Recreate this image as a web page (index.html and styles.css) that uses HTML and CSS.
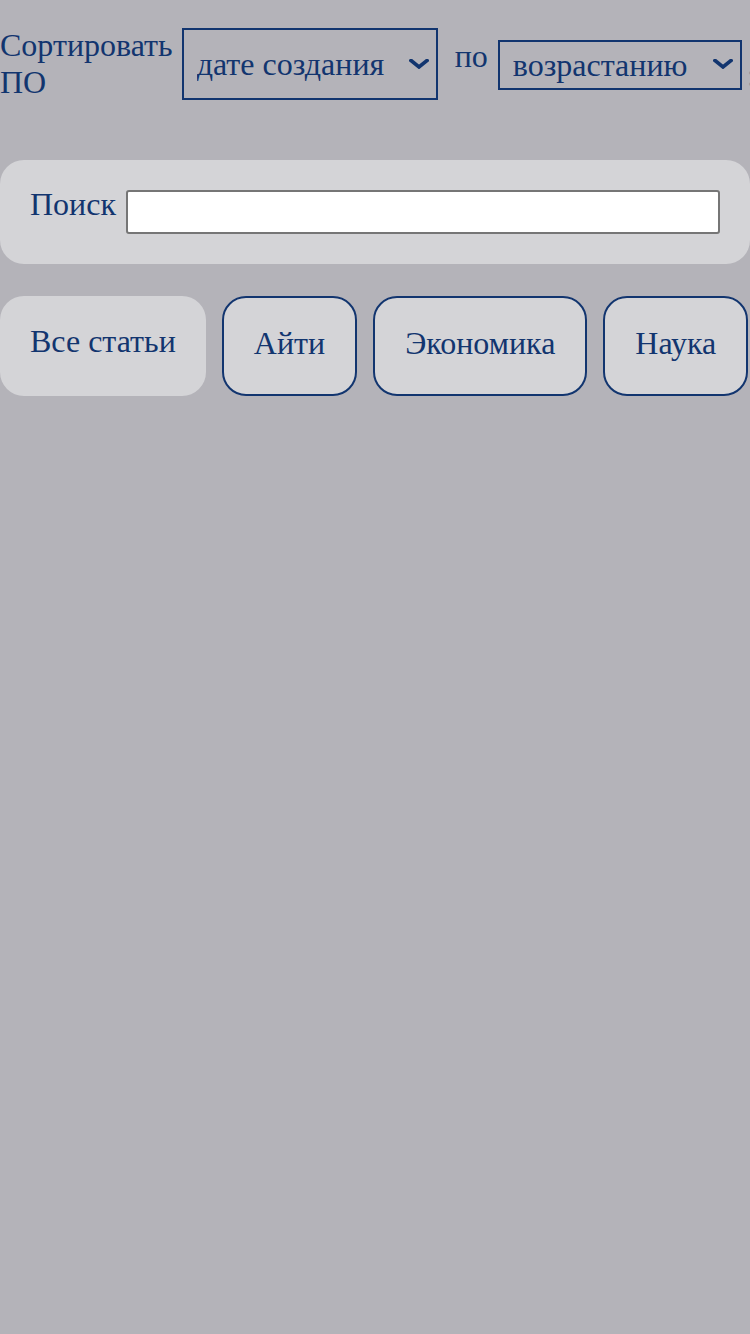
FILE: index.html
```html
<!DOCTYPE html>
<html lang="ru">
<head>
<meta charset="utf-8">
<link rel="stylesheet" href="styles.css">
</head>
<body>
<div class="page">
  <div class="sort-row">
    <label class="sort-label">Сортировать<br>ПО</label>
    <div class="select-wrap sort-field">
      <select class="sort-select">
        <option>дате создания</option>
      </select>
      <svg class="chevron" viewBox="0 0 20 10" width="20" height="10"><polyline points="2,1.5 10,8 18,1.5" fill="none" stroke="#12356f" stroke-width="3.6" stroke-linecap="square"/></svg>
    </div>
    <span class="by-label">по</span>
    <div class="select-wrap sort-order">
      <select class="sort-select">
        <option>возрастанию</option>
      </select>
      <svg class="chevron" viewBox="0 0 20 10" width="20" height="10"><polyline points="2,1.5 10,8 18,1.5" fill="none" stroke="#12356f" stroke-width="3.6" stroke-linecap="square"/></svg>
    </div>
    <span class="overflow">:</span>
  </div>
  <div class="search-panel">
    <label class="search-label">Поиск</label>
    <input class="search-input" type="text">
  </div>
  <div class="tags">
    <button class="tag tag-active">Все статьи</button>
    <button class="tag">Айти</button>
    <button class="tag">Экономика</button>
    <button class="tag">Наука</button>
  </div>
</div>
</body>
</html>
```
FILE: styles.css
```css
html, body {
  margin: 0;
  padding: 0;
  background: #b4b3b9;
}
body {
  font-family: "Liberation Serif", "Times New Roman", serif;
  color: #12356f;
  width: 750px;
  height: 1334px;
  overflow: hidden;
}
.page {
  padding-top: 28px;
}
.sort-row {
  display: flex;
  align-items: center;
  height: 72px;
  white-space: nowrap;
}
.sort-label {
  font-size: 32px;
  line-height: normal;
  margin-right: 9px;
}
.select-wrap {
  position: relative;
  flex: none;
}
.sort-select {
  display: block;
  width: 100%;
  height: 100%;
  font-family: "Liberation Serif", "Times New Roman", serif;
  font-size: 32px;
  color: #12356f;
  background: transparent;
  border: 2px solid #12356f;
  border-radius: 0;
  box-sizing: border-box;
  padding: 0 40px 0 13px;
  margin: 0;
  appearance: none;
  -webkit-appearance: none;
  outline: none;
}
.chevron {
  position: absolute;
  right: 9px;
  top: 50%;
  margin-top: -5px;
  pointer-events: none;
}
.sort-field {
  width: 256px;
  height: 72px;
}
.sort-order {
  width: 244px;
  height: 50px;
  margin-top: 2px;
}
.sort-order .chevron {
  margin-top: -6px;
}
.by-label {
  font-size: 32px;
  line-height: normal;
  margin: 10px 10px 0 17px;
  align-self: flex-start;
}
.overflow {
  font-size: 32px;
  color: #8a8f9c;
  margin-left: 5px;
  margin-top: 22px;
}
.search-panel {
  margin-top: 60px;
  background: #d4d4d7;
  border-radius: 24px;
  height: 104px;
  box-sizing: border-box;
  padding: 26px 30px 0 30px;
  display: flex;
  align-items: flex-start;
  gap: 10px;
}
.search-label {
  font-size: 32px;
  line-height: normal;
}
.search-input {
  flex: 1;
  height: 44px;
  margin-top: 4px;
  box-sizing: border-box;
  border: 2px solid #767676;
  border-radius: 3px;
  background: #fff;
  font-size: 30px;
}
.tags {
  margin-top: 32px;
  display: flex;
  gap: 16px;
}
.tag {
  font-family: "Liberation Serif", "Times New Roman", serif;
  font-size: 32px;
  line-height: normal;
  color: #12356f;
  background: #d4d4d7;
  border: 2px solid #12356f;
  border-radius: 24px;
  height: 100px;
  padding: 0 30px 6px;
  margin: 0;
  flex: none;
}
.tag-active {
  border: 0;
  padding: 0 30px 10px;
}
```
